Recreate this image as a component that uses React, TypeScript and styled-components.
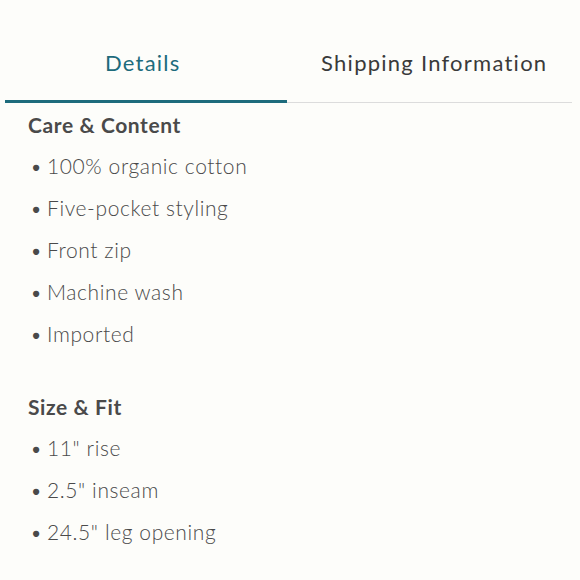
import React, { useState } from "react";
import styled, { createGlobalStyle } from "styled-components";

const GlobalStyle = createGlobalStyle`
  html, body {
    margin: 0;
    padding: 0;
    background: #fdfdfa;
  }
  body {
    font-family: Lato, "Open Sans", sans-serif;
    color: #4a4a4a;
  }
`;

const Page = styled.div`
  width: 580px;
  height: 580px;
  overflow: hidden;
  padding: 0 8px 0 5px;
  box-sizing: border-box;
`;

const TabBar = styled.div`
  display: flex;
  margin-top: 30px;
  border-bottom: 1px solid #dcdcdc;
`;

const Tab = styled.button<{ active: boolean }>`
  flex: 1;
  height: 73px;
  background: none;
  border: none;
  margin-bottom: -1px;
  border-bottom: 3px solid ${({ active }) => (active ? "#1d6b7c" : "transparent")};
  padding: 0 0 6px;
  font-family: inherit;
  font-size: 22px;
  letter-spacing: 1.25px;
  color: ${({ active }) => (active ? "#1d6b7c" : "#3a3a3a")};
  cursor: pointer;

  &:first-child {
    padding-right: 6px;
  }
  &:last-child {
    padding-left: 10px;
  }
`;

const Panel = styled.div`
  padding: 2px 0 0 23px;
`;

const Section = styled.section`
  margin-bottom: 32px;
`;

const Heading = styled.h3`
  margin: 0;
  height: 40px;
  line-height: 40px;
  font-size: 21px;
  font-weight: 700;
  letter-spacing: 0.6px;
  color: #4a4a4a;
`;

const List = styled.ul`
  list-style: none;
  margin: 0;
  padding: 0;
`;

const Item = styled.li`
  height: 42px;
  line-height: 42px;
  font-size: 21px;
  font-weight: 300;
  letter-spacing: 0.6px;
  color: #4a4a4a;
  &::before {
    content: "•";
    display: inline-block;
    width: 17px;
    padding-left: 2px;
  }
`;

const TABS = ["Details", "Shipping Information"];

const SECTIONS = [
  {
    title: "Care & Content",
    items: [
      "100% organic cotton",
      "Five-pocket styling",
      "Front zip",
      "Machine wash",
      "Imported",
    ],
  },
  {
    title: "Size & Fit",
    items: ['11" rise', '2.5" inseam', '24.5" leg opening'],
  },
];

const App = () => {
  const [tab, setTab] = useState("Details");

  return (
    <>
      <GlobalStyle />
      <Page>
        <TabBar>
          {TABS.map((t) => (
            <Tab key={t} active={t === tab} onClick={() => setTab(t)}>
              {t}
            </Tab>
          ))}
        </TabBar>
        <Panel>
          {SECTIONS.map((section) => (
            <Section key={section.title}>
              <Heading>{section.title}</Heading>
              <List>
                {section.items.map((item) => (
                  <Item key={item}>{item}</Item>
                ))}
              </List>
            </Section>
          ))}
        </Panel>
      </Page>
    </>
  );
};

export default App;
